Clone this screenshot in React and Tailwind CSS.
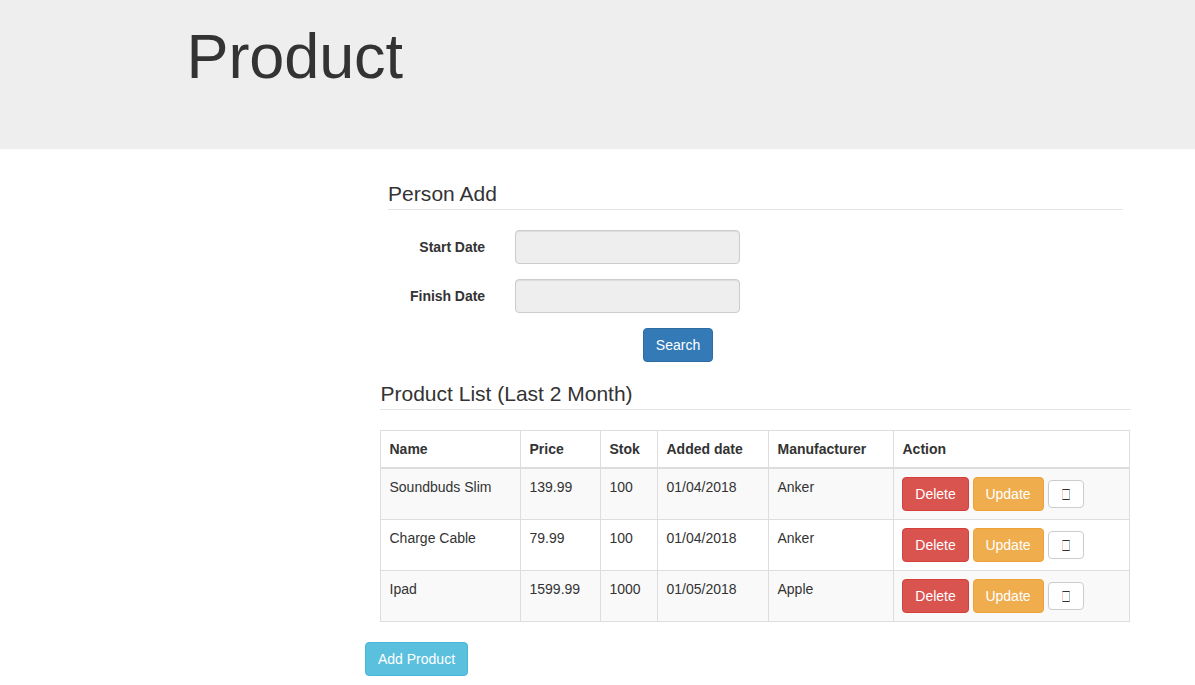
const products = [
  { name: "Soundbuds Slim", price: "139.99", stock: "100", date: "01/04/2018", maker: "Anker" },
  { name: "Charge Cable", price: "79.99", stock: "100", date: "01/04/2018", maker: "Anker" },
  { name: "Ipad", price: "1599.99", stock: "1000", date: "01/05/2018", maker: "Apple" },
];

const button = "inline-block whitespace-nowrap rounded-[4px] border py-1.5 text-center text-[14px] leading-5 text-white";
const cell = "border border-[#ddd] py-2 pl-[8.5px] pr-0 align-top";

function Field({ label }) {
  return (
    <div className="mb-[15px] flex h-[34px]">
      <label className="w-[97px] pt-[7px] text-right font-bold tracking-[-0.05px]">{label}</label>
      <input
        readOnly
        className="ml-[30px] h-[34px] w-[225px] rounded-[4px] border border-[#ccc] bg-[#eee] px-3 shadow-[inset_0_1px_1px_rgba(0,0,0,0.075)]"
      />
    </div>
  );
}

export default function App() {
  return (
    <div className="h-[685px] overflow-hidden bg-white font-['Liberation_Sans',Arial,sans-serif] text-[14px] leading-5 text-[#333]">
      <header className="h-[149px] bg-[#eee] pl-[186.5px] pt-[22px]">
        <h1 className="text-[63px] leading-[69px] tracking-[-0.1px]">Product</h1>
      </header>
      <main className="pl-[365px] pt-[30px]">
        <section className="ml-[23px] w-[735px]">
          <h2 className="mb-5 h-[31px] border-b border-[#e5e5e5] text-[21px] leading-[30px] tracking-[0.05px]">Person Add</h2>
          <Field label="Start Date" />
          <Field label="Finish Date" />
          <div className="flex pl-[255px]">
            <button className={`${button} w-[70px] border-[#2e6da4] bg-[#337ab7]`}>Search</button>
          </div>
        </section>
        <section className="ml-[15px] mt-[17px] w-[751px]">
          <h2 className="mb-5 h-[31px] border-b border-[#e5e5e5] pl-[0.5px] text-[21px] leading-[30px]">Product List (Last 2 Month)</h2>
          <table className="w-[750px] table-fixed border-collapse border border-[#ddd]">
            <colgroup>
              <col className="w-[140px]" />
              <col className="w-[80px]" />
              <col className="w-[57px]" />
              <col className="w-[111px]" />
              <col className="w-[125px]" />
              <col />
            </colgroup>
            <thead>
              <tr>
                {["Name", "Price", "Stok", "Added date", "Manufacturer", "Action"].map((title) => (
                  <th key={title} className="border border-b-2 border-[#ddd] py-2 pl-[8.5px] pr-0 text-left font-bold">{title}</th>
                ))}
              </tr>
            </thead>
            <tbody>
              {products.map((p) => (
                <tr key={p.name} className="h-[51px] odd:bg-[#f9f9f9]">
                  <td className={cell}>{p.name}</td>
                  <td className={cell}>{p.price}</td>
                  <td className={cell}>{p.stock}</td>
                  <td className={cell}>{p.date}</td>
                  <td className={cell}>{p.maker}</td>
                  <td className="border border-[#ddd] p-2 align-top">
                    <div className="flex items-center gap-1">
                      <button className={`${button} w-[67px] border-[#d43f3a] bg-[#d9534f]`}>Delete</button>
                      <button className={`${button} w-[71px] border-[#eea236] bg-[#f0ad4e] pr-px`}>Update</button>
                      <button className="flex h-7 w-9 justify-center rounded-[4px] border border-[#ccc] bg-white pt-2">
                        <span className="h-[11px] w-2 border border-y-[#333] border-l-[#f8cdb5] border-r-[#a5bfc5]" />
                      </button>
                    </div>
                  </td>
                </tr>
              ))}
            </tbody>
          </table>
        </section>
        <button className={`${button} mt-5 w-[103px] border-[#46b8da] bg-[#5bc0de]`}>Add Product</button>
      </main>
    </div>
  );
}
